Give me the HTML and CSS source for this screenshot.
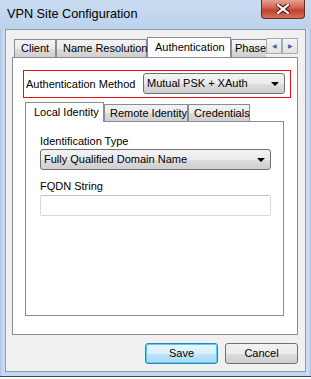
FILE: index.html
```html
<!DOCTYPE html>
<html>
	<head>
		<meta content="text/html;charset=utf-8" http-equiv="Content-Type">
		<link rel="stylesheet" href="styles.css">
	</head>
	<body>
		<div class="window">
			<div class="titlebar">
				<span class="title">VPN Site Configuration</span>
				<span class="close">
					<svg width="14" height="10" viewBox="0 0 14 10">
						<path d="M2 1 L12 9 M12 1 L2 9" stroke="#4a1c16" stroke-width="4.2" stroke-linecap="square"/>
						<path d="M2 1 L12 9 M12 1 L2 9" stroke="#fff" stroke-width="2.2" stroke-linecap="square"/>
					</svg>
				</span>
			</div>
			<div class="client">
				<div class="tabrow">
					<div class="tabs">
						<span class="tab t-client">Client</span>
						<span class="tab t-name">Name Resolution</span>
						<span class="tab active t-auth">Authentication</span>
						<span class="tab t-phase">Phase</span>
					</div>
					<span class="arrow">&#9664;</span>
					<span class="arrow">&#9654;</span>
				</div>
				<div class="panel">
					<div class="method">
						<span>Authentication Method</span>
						<div class="combo combo-method">Mutual PSK + XAuth<span class="drop"></span></div>
					</div>
					<div class="subtabs">
						<span class="tab active s-local">Local Identity</span>
						<span class="tab s-remote">Remote Identity</span>
						<span class="tab s-cred">Credentials</span>
					</div>
					<div class="subpanel">
						<div class="label">Identification Type</div>
						<div class="combo combo-wide">Fully Qualified Domain Name<span class="drop"></span></div>
						<div class="label label-next">FQDN String</div>
						<div class="field"></div>
					</div>
				</div>
				<div class="buttons">
					<span class="button default">Save</span>
					<span class="button">Cancel</span>
				</div>
			</div>
		</div>
	</body>
</html>
```

FILE: styles.css
```css
body {
	margin: 0;
	background: #fff;
	font-family: "Liberation Sans", Arial, sans-serif;
	font-size: 11px;
	color: #000;
}
.window {
	width: 311px;
	height: 376px;
	overflow: hidden;
	background: linear-gradient(90deg, #a9c5e6 0, #c9dbf0 3px, #c3d7ee 6px, #c3d7ee 305px, #cfe0f3 308px, #aac6e6 311px);
	border-bottom: 1px solid #3c4a5c;
}
.titlebar {
	height: 29px;
	display: flex;
	align-items: flex-start;
	background: linear-gradient(#c9dcf1, #bcd2ec);
}
.title {
	padding: 7px 0 0 7px;
	font-size: 12.7px;
	line-height: 15px;
	color: #000;
}
.close {
	margin-left: auto;
	margin-right: 6px;
	width: 44px;
	height: 19px;
	box-sizing: border-box;
	border: 1px solid #6e2a22;
	border-top: none;
	border-radius: 0 0 4px 4px;
	background: linear-gradient(#e8a093, #d35f4c 45%, #c2412c 55%, #d4705c);
	display: flex;
	align-items: center;
	justify-content: center;
	padding-bottom: 1px;
}
.client {
	margin: 0 5px;
	height: 343px;
	box-sizing: border-box;
	border: 1px solid #8b9bb0;
	background: #f0f0f0;
	padding: 7px 7px 0 6px;
}
.tabrow {
	display: flex;
	align-items: flex-start;
	height: 20px;
}
.tabs {
	display: flex;
	align-items: flex-end;
	width: 252px;
	height: 20px;
	padding-left: 2px;
	overflow: hidden;
	position: relative;
	z-index: 1;
	flex-shrink: 0;
}
.tab {
	display: block;
	box-sizing: border-box;
	height: 18px;
	border: 1px solid #898c95;
	border-bottom: none;
	background: linear-gradient(#f3f3f3, #ebebeb 50%, #dddddd 51%, #cfcfcf);
	line-height: 17px;
	padding-left: 6px;
	white-space: nowrap;
	flex-shrink: 0;
}
.tab.active {
	height: 21px;
	margin-bottom: -1px;
	background: #fff;
	line-height: 18px;
	padding-left: 7px;
}
.t-client { width: 42px; }
.t-name { width: 91px; }
.t-auth { width: 84px; }
.t-phase { width: 40px; padding-left: 3px; }
.arrow {
	box-sizing: border-box;
	width: 16px;
	height: 16px;
	margin-top: 1px;
	border: 1px solid #a7adb8;
	background: linear-gradient(#f4f4f4, #e2e2e2);
	color: #3f5da8;
	font-size: 6px;
	line-height: 14px;
	text-align: center;
}
.panel {
	height: 278px;
	box-sizing: border-box;
	border: 1px solid #898c95;
	background: #fff;
	padding: 12px 6px 0 10px;
}
.method {
	display: flex;
	align-items: center;
	height: 28px;
	box-sizing: border-box;
	border: 1px solid #e81010;
	padding: 0 5px 1px 2px;
}
.combo {
	position: relative;
	box-sizing: border-box;
	height: 21px;
	border: 1px solid #707070;
	border-radius: 3px;
	background: linear-gradient(#f2f2f2, #ebebeb 50%, #dddddd 51%, #cfcfcf);
	line-height: 19px;
	padding-left: 3px;
}
.combo-method {
	margin-left: auto;
	width: 142px;
}
.drop {
	position: absolute;
	right: 5px;
	top: 8px;
	border-left: 4px solid transparent;
	border-right: 4px solid transparent;
	border-top: 4px solid #000;
}
.subtabs {
	display: flex;
	align-items: flex-end;
	height: 19px;
	margin: 4px 0 0 2px;
	position: relative;
	z-index: 1;
}
.subtabs .tab {
	height: 17px;
	line-height: 16px;
	padding-left: 5px;
}
.subtabs .tab.active {
	height: 20px;
	line-height: 18px;
	padding-left: 8px;
}
.s-local { width: 79px; }
.s-remote { width: 84px; }
.s-cred { width: 62px; }
.subpanel {
	width: 259px;
	height: 195px;
	box-sizing: border-box;
	margin-left: 2px;
	border: 1px solid #898c95;
	background: #fff;
	padding: 13px 0 0 14px;
}
.label {
	line-height: 13px;
	height: 14px;
}
.label-next {
	margin-top: 10px;
}
.combo-wide {
	width: 231px;
}
.field {
	width: 231px;
	height: 21px;
	box-sizing: border-box;
	border: 1px solid #d5d8de;
	border-top-color: #c2c5cc;
	border-radius: 2px;
	margin-top: 1px;
	background: #fff;
}
.buttons {
	display: flex;
	justify-content: flex-end;
	gap: 7px;
	margin-top: 8px;
}
.button {
	width: 73px;
	height: 21px;
	box-sizing: border-box;
	border: 1px solid #707070;
	border-radius: 3px;
	background: linear-gradient(#f2f2f2, #ebebeb 50%, #dddddd 51%, #cfcfcf);
	text-align: center;
	line-height: 19px;
}
.button.default {
	border-color: #3c7fb1;
	box-shadow: inset 0 0 0 1px #48d4f4;
	background: linear-gradient(#eaf6fd, #d9f0fc 50%, #bee6fd 51%, #a7d9f5);
}
```
